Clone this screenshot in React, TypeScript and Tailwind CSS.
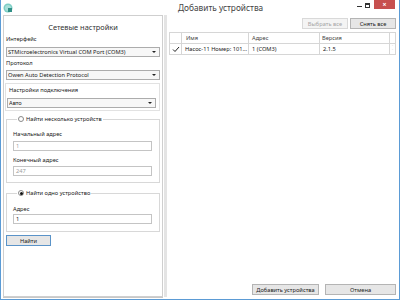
import React from "react";

const font = { fontFamily: '"Noto Sans", "Open Sans", sans-serif' };

function Dropdown({ value, className = "" }: { value: string; className?: string }) {
  return (
    <div
      className={`h-[10px] border border-[#acacac] bg-[#f7f7f7] flex items-center pl-[1px] pr-[3px] text-[5.7px] leading-[8px] text-[#222] ${className}`}
    >
      <span className="flex-1 truncate">{value}</span>
      <span className="w-0 h-0 border-l-[2px] border-r-[2px] border-t-[2px] border-l-transparent border-r-transparent border-t-[#222]" />
    </div>
  );
}

function Field({ value, muted }: { value: string; muted?: boolean }) {
  return (
    <div
      className={`h-[10px] border border-[#c4c4c4] bg-white flex items-center pl-[2px] text-[5.7px] leading-[8px] ${
        muted ? "text-[#a0a0a0]" : "text-[#222]"
      }`}
    >
      {value}
    </div>
  );
}

function Radio({ checked }: { checked?: boolean }) {
  return (
    <span className="w-[6px] h-[6px] rounded-full border border-[#8a8a8a] bg-white flex items-center justify-center">
      {checked && <span className="w-[3px] h-[3px] rounded-full bg-[#111]" />}
    </span>
  );
}

function Group({
  label,
  checked,
  children,
}: {
  label: string;
  checked?: boolean;
  children: React.ReactNode;
}) {
  return (
    <fieldset className="border border-[#d8d8d8] pl-[6px] pr-[7px]">
      <legend className="ml-[4px] px-[1px] flex items-center gap-[2px] h-[8px] text-[5.7px] leading-[8px] text-[#222]">
        <Radio checked={checked} />
        <span>{label}</span>
      </legend>
      {children}
    </fieldset>
  );
}

function Button({
  label,
  className = "",
  disabled,
  focused,
}: {
  label: string;
  className?: string;
  disabled?: boolean;
  focused?: boolean;
}) {
  return (
    <div
      className={`h-[11px] border flex items-center justify-center text-[5.7px] leading-[8px] ${
        disabled
          ? "border-[#d9d9d9] bg-[#f4f4f4] text-[#a6a6a6]"
          : focused
          ? "border-[#5a93c8] bg-[#e6e6e6] text-[#222]"
          : "border-[#b4b4b4] bg-[#e6e6e6] text-[#222]"
      } ${className}`}
    >
      {label}
    </div>
  );
}

function AppIcon() {
  return (
    <svg width="10" height="10" viewBox="0 0 10 10" className="block">
      <circle cx="5" cy="5" r="4.5" fill="#7ccdc4" />
      <circle cx="5" cy="5" r="3" fill="#a9e0da" />
      <rect x="5" y="5" width="4" height="4" fill="#2f8f86" />
    </svg>
  );
}

export default function App() {
  return (
    <div
      className="w-[400px] h-[300px] bg-white border-x border-b border-[#5b9bd5] flex flex-col overflow-hidden"
      style={font}
    >
      {/* title bar */}
      <div className="h-[15px] flex flex-row shrink-0">
        <div className="w-[12px] h-[15px] pl-[2px] pt-[3px] shrink-0">
          <AppIcon />
        </div>
        <div className="ml-[165px] pt-[2px] whitespace-nowrap text-[8.3px] leading-[12px] text-[#444]">
          Добавить устройства
        </div>
        <div className="ml-auto flex items-start shrink-0 h-[10px]">
          <span className="w-[5px] h-[1px] bg-[#333] mt-[6px] mr-[3px]" />
          <span className="w-[5px] h-[5px] border border-[#333] border-t-2 mt-[3px] mr-[4px]" />
          <span className="w-[21px] h-[9px] bg-[#c7504f] flex items-center justify-center text-white text-[7px] leading-[7px] font-bold mr-[4px]">
            ×
          </span>
        </div>
      </div>

      {/* body */}
      <div className="flex-1 flex">
        {/* left panel */}
        <div className="ml-[2px] w-[160px] h-[282px] border border-[#cfcfcf] bg-white flex flex-col px-[2px] shadow-[0_1px_0_#c8c8c8]">
          <div className="mt-[6px] h-[10px] text-center text-[7.4px] leading-[10px] text-[#333]">
            Сетевые настройки
          </div>
          <div className="mt-[3px] h-[8px] text-[5.7px] leading-[8px] text-[#222]">Интерфейс</div>
          <Dropdown className="mt-[4px]" value="STMicroelectronics Virtual COM Port (COM3)" />
          <div className="mt-[2px] h-[8px] text-[5.7px] leading-[8px] text-[#222]">Протокол</div>
          <Dropdown className="mt-[3px]" value="Owen Auto Detection Protocol" />

          <div className="mt-[3px] -ml-[1px] border border-[#e2e2e2] pl-[1px] pr-[3px] pb-[2px]">
            <div className="mt-[2px] ml-[2px] h-[8px] text-[5.7px] leading-[8px] text-[#222]">
              Настройки подключения
            </div>
            <Dropdown className="mt-[4px] h-[9px]" value="Авто" />
          </div>

          <div className="mt-[4px]">
            <Group label="Найти несколько устройств">
              <div className="mt-[7px] h-[8px] text-[5.7px] leading-[8px] text-[#222]">Начальный адрес</div>
              <div className="mt-[3px]">
                <Field value="1" muted />
              </div>
              <div className="mt-[5px] h-[8px] text-[5.7px] leading-[8px] text-[#222]">Конечный адрес</div>
              <div className="mt-[2px] mb-[6px]">
                <Field value="247" muted />
              </div>
            </Group>
          </div>

          <div className="mt-[6px]">
            <Group label="Найти одно устройство" checked>
              <div className="mt-[8px] h-[8px] text-[5.7px] leading-[8px] text-[#222]">Адрес</div>
              <div className="mt-[1px] mb-[7px]">
                <Field value="1" />
              </div>
            </Group>
          </div>

          <Button label="Найти" focused className="mt-[3px] w-[45px]" />
        </div>

        {/* splitter */}
        <div className="ml-[1px] w-[3px] h-[282px] bg-[#e4e4e4]" />

        {/* right area */}
        <div className="flex-1 flex flex-col pl-[2px] pr-[3px]">
          <div className="mt-[3px] flex justify-end gap-[2px]">
            <Button label="Выбрать все" disabled className="w-[46px]" />
            <Button label="Снять все" className="w-[46px]" />
          </div>

          <div className="mt-[3px] border border-[#d6d6d6] text-[5.7px] leading-[8px]">
            <div className="flex h-[11px] border-b border-[#d6d6d6] text-[#444]">
              <div className="w-[12px] border-r border-[#d6d6d6]" />
              <div className="w-[67px] border-r border-[#d6d6d6] pl-[4px] flex items-center">Имя</div>
              <div className="w-[71px] border-r border-[#d6d6d6] pl-[3px] flex items-center">Адрес</div>
              <div className="w-[70px] border-r border-[#d6d6d6] pl-[2px] flex items-center">Версия</div>
              <div className="flex-1" />
            </div>
            <div className="flex h-[10px] text-[#222]">
              <div className="w-[12px] border-r border-[#d6d6d6] flex items-center justify-center">
                <svg width="8" height="7" viewBox="0 0 8 7">
                  <path d="M1 3.5 L3 5.5 L7 1" stroke="#222" strokeWidth="1" fill="none" />
                </svg>
              </div>
              <div className="w-[67px] border-r border-[#d6d6d6] pl-[3px] flex items-center whitespace-nowrap overflow-hidden">
                Насос-11 Номер: 101...
              </div>
              <div className="w-[71px] border-r border-[#d6d6d6] pl-[3px] flex items-center">1 (COM3)</div>
              <div className="w-[70px] border-r border-[#d6d6d6] pl-[3px] flex items-center">2.1.5</div>
              <div className="flex-1 flex flex-col items-center justify-between py-[1px] text-[#c0c0c0] text-[4px] leading-[4px]">
                <span>˄</span>
                <span>˅</span>
              </div>
            </div>
          </div>

          <div className="mt-auto mb-[4px] flex justify-end gap-[6px]">
            <Button label="Добавить устройства" className="w-[67px]" />
            <Button label="Отмена" className="w-[71px]" />
          </div>
        </div>
      </div>
    </div>
  );
}
